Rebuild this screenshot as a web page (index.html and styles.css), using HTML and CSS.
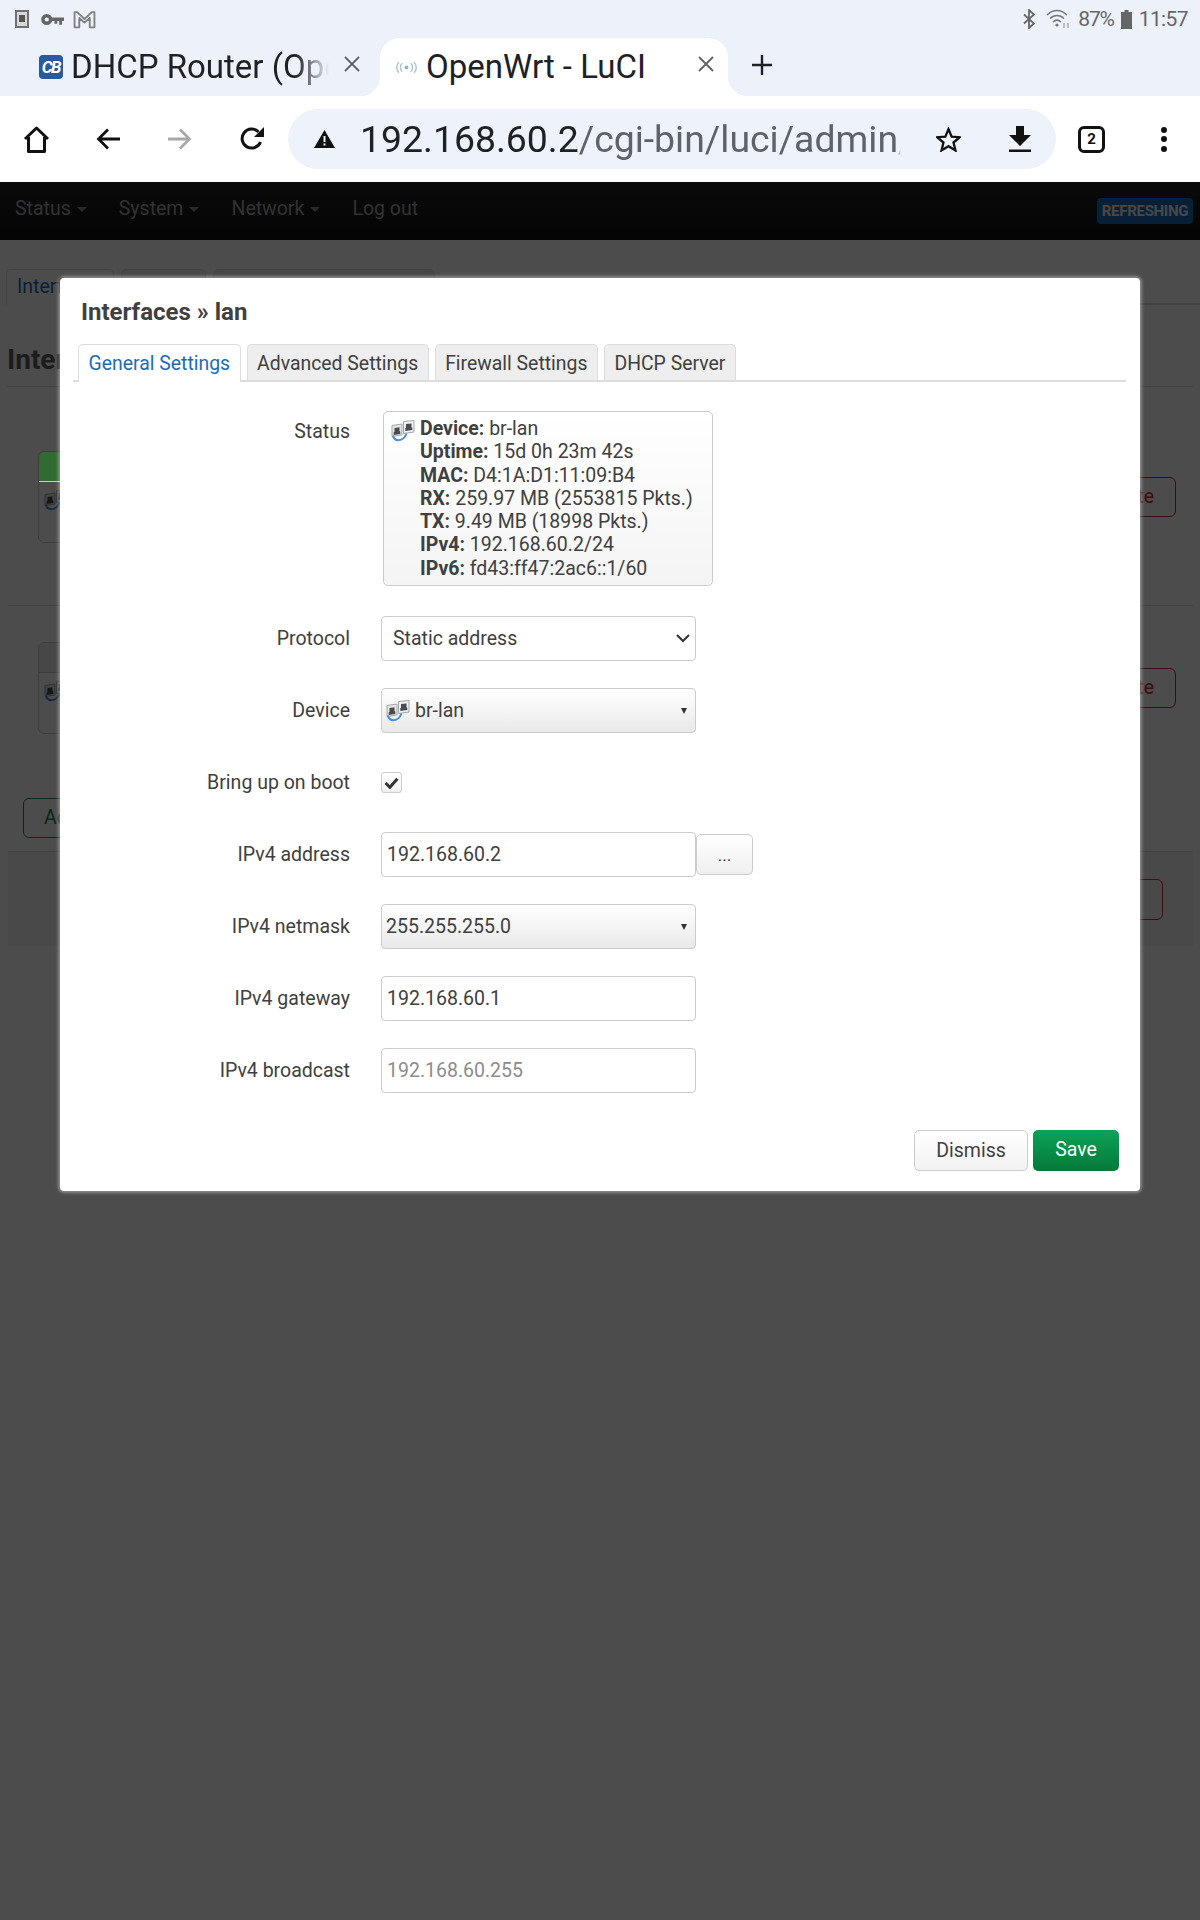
FILE: index.html
```html
<!DOCTYPE html>
<html lang="en">
<head>
    <meta charset="UTF-8">
    <meta name="viewport" content="width=device-width, initial-scale=1.0">
    <title>OpenWrt - LuCI</title>
    <link rel="stylesheet" href="styles.css">
</head>
<body>
    <svg class="defs" width="0" height="0">
        <symbol id="iface" viewBox="0 0 24 22">
            <path d="M1 5.500l10-1.500v11L1 16.500z" fill="#e4e6e8" stroke="#a3a7ab" stroke-width="1"/>
            <path d="M12.500 1.500L23 .5v11.500l-10.500 1.500z" fill="#eef0f2" stroke="#a3a7ab" stroke-width="1"/>
            <path d="M3.500 8l5-.7v3.800l.8.5v2.400l-6.600.9v-2.600l.8-.6z" fill="#4a4d50"/>
            <path d="M15 4l5.500-.6v3.800l.8.5V10l-7 .9V8.300l.7-.6z" fill="#4a4d50"/>
            <path d="M2 15.500c1 6 10 7 13.500-2" fill="none" stroke="#4c8fd4" stroke-width="2"/>
        </symbol>
    </svg>

    <div class="statusbar">
        <div class="status-left">
            <svg class="ic-sim" viewBox="0 0 14 18"><rect x="1" y="1" width="12" height="16" fill="#d8d8d8" stroke="#707070" stroke-width="2"/><rect x="4" y="5" width="6" height="7" fill="#555"/></svg>
            <svg class="ic-key" viewBox="0 0 24 13"><circle cx="6" cy="6.500" r="4" fill="none" stroke="#666" stroke-width="3.600"/><path d="M10 4.500h14v3.500h-2v4h-3V8h-2v3h-3V8h-4z" fill="#666"/></svg>
            <svg class="ic-mail" viewBox="0 0 22 18"><path d="M1.500 16.500V2h2.500l7 6.500L18 2h2.500v14.500h-4.500V7.500L11 12 6 7.500v9z" fill="none" stroke="#808080" stroke-width="1.800" stroke-linejoin="round"/></svg>
        </div>
        <div class="status-right">
            <svg class="ic-bt" viewBox="0 0 12 20"><path d="M1 5.500l10 9-5 4.500V1l5 4.500-10 9" fill="none" stroke="#666" stroke-width="1.800"/></svg>
            <svg class="ic-wifi" viewBox="0 0 25 20"><path d="M1 6c6-6 14-6 20 0M4 9.500c4-4 10-4 14 0M7 13c2.400-2.400 5.600-2.400 8 0" fill="none" stroke="#777" stroke-width="1.500"/><circle cx="11" cy="16" r="1.600" fill="#777"/><path d="M18 14v5M22 19v-5" stroke="#aaa" stroke-width="1.500"/></svg>
            <span class="status-text pct">87%</span>
            <svg class="ic-batt" viewBox="0 0 11 19"><path d="M3.500 0h4v2H11v17H0V2h3.500z" fill="#666"/></svg>
            <span class="status-text">11:57</span>
        </div>
    </div>

    <div class="tabstrip">
        <div class="tab">
            <span class="favicon-cb">CB</span>
            <span class="tab-title fade">DHCP Router (OpenWrt)</span>
            <svg class="tab-close" viewBox="0 0 16 16"><path d="M1 1l14 14M15 1L1 15" stroke="#5f6368" stroke-width="1.800"/></svg>
        </div>
        <div class="tab active">
            <svg class="favicon-wifi" viewBox="0 0 22 13"><circle cx="11" cy="6.500" r="2" fill="#8fb4c4"/><path d="M6.500 2c-2.500 2.500-2.500 6.500 0 9M15.500 2c2.500 2.500 2.500 6.500 0 9M3 1c-3 3-3 8 0 11M19 1c3 3 3 8 0 11" fill="none" stroke="#a9c6d2" stroke-width="1.500"/></svg>
            <span class="tab-title">OpenWrt - LuCI</span>
            <svg class="tab-close" viewBox="0 0 16 16"><path d="M1 1l14 14M15 1L1 15" stroke="#5f6368" stroke-width="1.800"/></svg>
        </div>
        <svg class="tab-new" viewBox="0 0 20 20"><path d="M10 0v20M0 10h20" stroke="#202124" stroke-width="2.400"/></svg>
    </div>

    <div class="toolbar">
        <svg class="tool ic-home" viewBox="0 0 27 27"><path d="M2 13L13.500 2 25 13M5.500 11v14.500h16V11" fill="none" stroke="#111" stroke-width="3" stroke-linejoin="round"/></svg>
        <svg class="tool ic-back" viewBox="0 0 24 22"><path d="M12 1.500L2.500 11l9.500 9.500M3 11h21" fill="none" stroke="#111" stroke-width="2.800"/></svg>
        <svg class="tool ic-forward" viewBox="0 0 24 22"><path d="M12 1.500l9.500 9.500-9.500 9.500M21 11H0" fill="none" stroke="#a8a8a8" stroke-width="2.800"/></svg>
        <svg class="tool ic-reload" viewBox="0 0 24 24"><path d="M20.500 15A9.500 9.500 0 1 1 18.500 5" fill="none" stroke="#111" stroke-width="3"/><path d="M24 0v10H14z" fill="#111"/></svg>
        <div class="omnibox">
            <svg class="ic-warn" viewBox="0 0 21 18"><path d="M10.500 0L21 18H0z" fill="#111"/><path d="M9.500 6h2v6h-2zM9.500 13.500h2v2h-2z" fill="#eef2fa"/></svg>
            <div class="url fade-url"><span class="url-host">192.168.60.2</span>/cgi-bin/luci/admin/network/network</div>
            <svg class="ic-star" viewBox="0 0 24 24"><path d="M12 2l3 7.200 7.800.6-6 5.100 1.900 7.600L12 18.400l-6.700 4.100 1.900-7.600-6-5.100L9 9.200z" fill="none" stroke="#111" stroke-width="2.200"/></svg>
            <svg class="ic-download" viewBox="0 0 22 26"><path d="M7 0h8v9h7L11 20 0 9h7zM0 23.500h22V26H0z" fill="#111"/></svg>
        </div>
        <div class="tabcount">2</div>
        <div class="dots"><i></i><i></i><i></i></div>
    </div>

    <div class="page">
        <div class="navbar">
            <ul class="nav-menu">
                <li class="dropdown">Status</li>
                <li class="dropdown">System</li>
                <li class="dropdown">Network</li>
                <li>Log out</li>
            </ul>
            <span class="badge">REFRESHING</span>
        </div>

        <div class="content">
            <ul class="page-tabs">
                <li class="first">Interfaces</li>
                <li class="second">Global</li>
                <li class="third">Devices</li>
            </ul>
            <h2>Interfaces</h2>
            <div class="iface-row row-lan">
                <div class="iface-box">
                    <div class="iface-head green"></div>
                    <div class="iface-body"><svg class="iface-icon"><use href="#iface"/></svg></div>
                </div>
                <span class="btn-delete">Delete</span>
            </div>
            <div class="iface-row row-wan">
                <div class="iface-box">
                    <div class="iface-head"></div>
                    <div class="iface-body"><svg class="iface-icon"><use href="#iface"/></svg></div>
                </div>
                <span class="btn-delete">Delete</span>
            </div>
            <div class="add-row"><span class="btn-add">Add new interface</span></div>
            <div class="page-actions"><span class="btn-apply"></span></div>
        </div>

        <div class="backdrop"></div>

        <div class="modal">
            <h4>Interfaces » lan</h4>
            <ul class="modal-tabs">
                <li class="selected">General Settings</li>
                <li>Advanced Settings</li>
                <li>Firewall Settings</li>
                <li>DHCP Server</li>
            </ul>

            <div class="form-row status-row">
                <label>Status</label>
                <div class="status-box">
                    <svg class="status-icon"><use href="#iface"/></svg>
                    <div>
                        <div><b>Device:</b> br-lan</div>
                        <div><b>Uptime:</b> 15d 0h 23m 42s</div>
                        <div><b>MAC:</b> D4:1A:D1:11:09:B4</div>
                        <div><b>RX:</b> 259.97 MB (2553815 Pkts.)</div>
                        <div><b>TX:</b> 9.49 MB (18998 Pkts.)</div>
                        <div><b>IPv4:</b> 192.168.60.2/24</div>
                        <div><b>IPv6:</b> fd43:ff47:2ac6::1/60</div>
                    </div>
                </div>
            </div>

            <div class="form-row">
                <label>Protocol</label>
                <div class="field select-native">
                    <span>Static address</span>
                    <svg class="chevron" viewBox="0 0 14 9"><path d="M1 1l6 6 6-6" fill="none" stroke="#333" stroke-width="2"/></svg>
                </div>
            </div>
            <div class="form-row">
                <label>Device</label>
                <div class="field dropdown-field device">
                    <svg class="device-icon"><use href="#iface"/></svg>
                    <span>br-lan</span>
                    <i class="arrow"></i>
                </div>
            </div>
            <div class="form-row">
                <label>Bring up on boot</label>
                <div class="checkbox">
                    <svg viewBox="0 0 14 11"><path d="M1.500 5.500l4 4 7-8" fill="none" stroke="#333" stroke-width="2.800"/></svg>
                </div>
            </div>
            <div class="form-row">
                <label>IPv4 address</label>
                <div class="field text-field">192.168.60.2</div>
                <span class="btn-more">...</span>
            </div>
            <div class="form-row">
                <label>IPv4 netmask</label>
                <div class="field dropdown-field">
                    <span>255.255.255.0</span>
                    <i class="arrow"></i>
                </div>
            </div>
            <div class="form-row">
                <label>IPv4 gateway</label>
                <div class="field text-field">192.168.60.1</div>
            </div>
            <div class="form-row">
                <label>IPv4 broadcast</label>
                <div class="field text-field placeholder">192.168.60.255</div>
            </div>

            <div class="modal-actions">
                <span class="btn btn-dismiss">Dismiss</span>
                <span class="btn btn-save">Save</span>
            </div>
        </div>
    </div>
</body>
</html>
```

FILE: styles.css
```css
* {
    box-sizing: border-box;
}
html, body {
    margin: 0;
    height: 1920px;
    overflow: hidden;
}
body {
    width: 1200px;
    background: #fff;
    color: #404040;
    font-family: Roboto, "Liberation Sans", sans-serif;
    font-size: 19.5px;
}
ul {
    list-style: none;
    margin: 0;
    padding: 0;
}
.defs {
    position: absolute;
}

/* status bar */
.statusbar {
    height: 38px;
    background: #edf2fa;
    display: flex;
    justify-content: space-between;
    align-items: center;
    padding: 0 12px 0 15px;
}
.status-left, .status-right {
    display: flex;
    align-items: center;
}
.ic-sim { width: 14px; height: 18px; margin-right: 12px; }
.ic-key { width: 23px; height: 13px; margin-right: 9px; }
.ic-mail { width: 23px; height: 19px; }
.ic-bt { width: 12px; height: 20px; margin-right: 11px; }
.ic-wifi { width: 25px; height: 20px; margin-right: 7px; }
.ic-batt { width: 11px; height: 19px; margin: 0 7px; }
.status-text {
    font-size: 21px;
    color: #666;
    letter-spacing: -0.6px;
}
.pct {
    letter-spacing: -1.2px;
}

/* tabs */
.tabstrip {
    height: 58px;
    background: #edf2fa;
    display: flex;
    align-items: stretch;
    position: relative;
}
.tab {
    display: flex;
    align-items: center;
    position: relative;
    font-size: 33px;
    color: #202124;
    white-space: nowrap;
}
.tab:first-child {
    width: 380px;
    padding-left: 39px;
}
.tab.active {
    width: 348px;
    background: #fff;
    border-radius: 20px 20px 0 0;
    padding-left: 16px;
}
.tab.active::before, .tab.active::after {
    content: "";
    position: absolute;
    bottom: 0;
    width: 20px;
    height: 20px;
}
.tab.active::before {
    left: -20px;
    background: radial-gradient(circle at 0 0, transparent 20px, #fff 20.5px);
}
.tab.active::after {
    right: -20px;
    background: radial-gradient(circle at 100% 0, transparent 20px, #fff 20.5px);
}
.favicon-cb {
    width: 24px;
    height: 24px;
    flex: none;
    background: #2a5a9e;
    border-radius: 4px;
    color: #fff;
    font-size: 17px;
    font-weight: bold;
    font-style: italic;
    line-height: 24px;
    text-align: center;
    letter-spacing: -1.500px;
    margin-right: 8px;
}
.favicon-wifi {
    width: 21px;
    height: 13px;
    flex: none;
    margin-right: 9px;
}
.tab-title {
    overflow: hidden;
    display: block;
    width: 240px;
    line-height: 44px;
}
.tab-title.fade {
    width: 260px;
    -webkit-mask-image: linear-gradient(to right, #000 225px, transparent 258px);
    mask-image: linear-gradient(to right, #000 225px, transparent 258px);
}
.tab-close {
    width: 16px;
    height: 16px;
    position: absolute;
    top: 18px;
    right: 14px;
}
.tab:first-child .tab-close {
    right: 20px;
}
.tab-new {
    width: 20px;
    height: 20px;
    margin: 17px 0 0 24px;
}

/* toolbar */
.toolbar {
    height: 86px;
    display: flex;
    align-items: center;
    background: #fff;
}
.tool {
    flex: none;
}
.ic-home { width: 27px; height: 27px; margin-left: 23px; }
.ic-back { width: 24px; height: 22px; margin-left: 46px; }
.ic-forward { width: 24px; height: 22px; margin-left: 48px; }
.ic-reload { width: 24px; height: 24px; margin-left: 48px; }
.omnibox {
    width: 768px;
    height: 60px;
    margin-left: 24px;
    background: #eef2fa;
    border-radius: 30px;
    display: flex;
    align-items: center;
    padding-left: 26px;
    position: relative;
}
.ic-warn {
    width: 21px;
    height: 18px;
    flex: none;
}
.url {
    width: 541px;
    margin-left: 25px;
    font-size: 37.400px;
    color: #5f6368;
    white-space: nowrap;
    overflow: hidden;
    line-height: 50px;
}
.url-host {
    color: #202124;
}
.fade-url {
    -webkit-mask-image: linear-gradient(to right, #000 536px, transparent 541px);
    mask-image: linear-gradient(to right, #000 536px, transparent 541px);
}
.ic-star { width: 25px; height: 25px; margin-left: 35px; flex: none; }
.ic-download { width: 22px; height: 26px; margin-left: 48px; flex: none; }
.tabcount {
    width: 27px;
    height: 27px;
    margin-left: 22px;
    border: 3px solid #111;
    border-radius: 6px;
    font-size: 15px;
    font-weight: bold;
    line-height: 21px;
    text-align: center;
    color: #111;
}
.dots {
    margin-left: 56px;
    display: flex;
    flex-direction: column;
    gap: 3.500px;
}
.dots i {
    display: block;
    width: 6px;
    height: 6px;
    border-radius: 50%;
    background: #111;
}

/* page under the dialog */
.page {
    position: relative;
    height: 1738px;
    background: #fff;
    overflow: hidden;
}
.navbar {
    height: 58px;
    background: linear-gradient(#222, #111);
    display: flex;
    justify-content: space-between;
    align-items: center;
    padding: 0 7px 0 15px;
}
.nav-menu {
    display: flex;
    color: #a6a6a6;
    font-size: 19.500px;
    padding-bottom: 5px;
}
.nav-menu li {
    margin-right: 32px;
}
.dropdown::after {
    content: "";
    display: inline-block;
    margin-left: 6px;
    vertical-align: middle;
    border-top: 5px solid #8a8a8a;
    border-left: 5px solid transparent;
    border-right: 5px solid transparent;
}
.badge {
    width: 96px;
    height: 26px;
    background: #1a6ab8;
    border-radius: 4px;
    color: #eee;
    font-size: 15px;
    font-weight: bold;
    line-height: 26px;
    text-align: center;
    letter-spacing: -0.3px;
}
.content {
    padding: 29px 7px 0 8px;
}
.page-tabs {
    display: flex;
    height: 36px;
    border-bottom: 2px solid #ddd;
    margin-right: -7px;
}
.page-tabs li {
    height: 36px;
    border: 1px solid #ddd;
    border-radius: 5px 5px 0 0;
    background: #eee;
    padding: 5px 10px;
    overflow: hidden;
    margin-right: 7px;
}
.page-tabs .first {
    width: 108px;
    margin-left: -2px;
    background: #fff;
    color: #1c6cb5;
    border-bottom-color: #fff;
}
.page-tabs .second { width: 85px; }
.page-tabs .third { width: 222px; }
.content h2 {
    margin: 0;
    height: 82px;
    padding-top: 35px;
    margin-left: -1px;
    font-size: 28px;
    line-height: 40px;
    color: #606060;
    border-bottom: 1px solid #ddd;
}
.iface-row {
    display: flex;
    justify-content: space-between;
    align-items: center;
    padding: 0 17px 0 30px;
    border-bottom: 1px solid #ddd;
}
.row-lan {
    height: 219px;
    padding-top: 0;
    align-items: flex-start;
}
.row-lan .iface-box { margin-top: 64px; }
.row-lan .btn-delete { margin-top: 90px; }
.row-wan {
    height: 150px;
    align-items: flex-start;
    border-bottom: 0;
}
.row-wan .iface-box { margin-top: 36px; }
.row-wan .btn-delete { margin-top: 62px; }
.iface-box {
    width: 220px;
    height: 92px;
    border: 1px solid #ccc;
    border-radius: 6px;
    overflow: hidden;
}
.iface-head {
    height: 30px;
    background: #eee;
    border-bottom: 1px solid #ccc;
}
/* the status colour stays bright through the backdrop */
.iface-head.green {
    background: #316b32;
    position: relative;
    z-index: 2;
}
.iface-icon {
    width: 24px;
    height: 22px;
    margin: 7px 0 0 5px;
    display: block;
}
.btn-delete {
    width: 130px;
    height: 40px;
    border: 1px solid #c9302c;
    border-radius: 6px;
    color: #c9302c;
    line-height: 38px;
    text-align: right;
    padding-right: 21px;
}
.add-row {
    height: 96px;
    padding: 42px 0 0 15px;
    border-bottom: 1px solid #ddd;
}
.btn-add {
    display: block;
    width: 200px;
    height: 40px;
    border: 1px solid #1d8a4d;
    border-radius: 6px;
    color: #1d8a4d;
    line-height: 38px;
    padding-left: 20px;
}
.page-actions {
    height: 94px;
    background: #f6f6f6;
    padding: 27px 30px 0 0;
    display: flex;
    justify-content: flex-end;
}
.btn-apply {
    width: 130px;
    height: 41px;
    border: 1px solid #c9302c;
    border-radius: 6px;
}
.backdrop {
    position: absolute;
    top: 0;
    left: 0;
    right: 0;
    bottom: 0;
    z-index: 1;
    background: rgba(0, 0, 0, 0.7);
}

/* dialog */
.modal {
    position: absolute;
    z-index: 3;
    top: 96px;
    left: 60px;
    width: 1080px;
    height: 913px;
    background: #fff;
    border-radius: 4px;
    box-shadow: 0 0 3px 2px rgba(255, 255, 255, 0.35);
    padding: 0 21px;
}
.modal h4 {
    margin: 0;
    padding-top: 19px;
    height: 66px;
    font-size: 24px;
    line-height: 30px;
    font-weight: bold;
    color: #404040;
}
.modal-tabs {
    display: flex;
    height: 38px;
    margin: 0 -7px 0 -8px;
    padding-left: 5px;
    border-bottom: 2px solid #ddd;
    font-size: 19.400px;
}
.modal-tabs li {
    height: 36px;
    margin-right: 6px;
    padding: 0 9.500px;
    background: #eee;
    border: 1px solid #ddd;
    border-bottom: 0;
    border-radius: 5px 5px 0 0;
    line-height: 37px;
    white-space: nowrap;
}
.modal-tabs .selected {
    height: 38px;
    background: #fff;
    color: #1c6cb5;
}
.form-row {
    display: flex;
    align-items: center;
    height: 45px;
    margin-bottom: 27px;
}
.form-row label {
    width: 269px;
    text-align: right;
    margin-right: 31px;
    flex: none;
}
.status-row {
    height: 175px;
    margin: 29px 0 30px;
    align-items: flex-start;
}
.status-row label {
    margin-right: 33px;
    padding-top: 9px;
}
.status-box {
    width: 330px;
    height: 175px;
    display: flex;
    padding: 5px 6px;
    border: 1px solid #ccc;
    border-radius: 5px;
    background: linear-gradient(#fff, #f4f4f4);
    line-height: 23.300px;
    white-space: nowrap;
}
.status-icon {
    width: 24px;
    height: 22px;
    margin: 3px 5px 0 1px;
    flex: none;
}
.status-box b {
    font-weight: bold;
}
.field {
    width: 315px;
    height: 45px;
    border: 1px solid #ccc;
    border-radius: 4px;
    display: flex;
    align-items: center;
    flex: none;
}
.select-native {
    padding: 0 5px 0 11px;
    justify-content: space-between;
}
.chevron {
    width: 14px;
    height: 9px;
}
.dropdown-field {
    background: linear-gradient(#fff, #e9e9e9);
    padding: 0 4px;
    position: relative;
}
.arrow {
    position: absolute;
    right: 8px;
    top: 19px;
    border-top: 6px solid #333;
    border-left: 3px solid transparent;
    border-right: 3px solid transparent;
}
.device-icon {
    width: 24px;
    height: 22px;
    margin-right: 5px;
    flex: none;
}
.text-field {
    padding: 0 5px;
}
.placeholder {
    color: #8c8c8c;
}
.checkbox {
    width: 21px;
    height: 21px;
    border: 1px solid #ccc;
    border-radius: 3px;
    display: flex;
    align-items: center;
    justify-content: center;
    background: linear-gradient(#fff, #f0f0f0);
}
.checkbox svg {
    width: 15px;
    height: 12px;
}
.btn-more {
    width: 57px;
    height: 41px;
    border: 1px solid #ccc;
    border-radius: 5px;
    background: linear-gradient(#fff, #efefef);
    text-align: center;
    line-height: 40px;
    font-size: 17px;
}
.modal-actions {
    display: flex;
    justify-content: flex-end;
    gap: 5px;
    margin: 37px 0 0 0;
}
.btn {
    height: 41px;
    border-radius: 5px;
    line-height: 39px;
    text-align: center;
}
.btn-dismiss {
    width: 114px;
    border: 1px solid #ccc;
    background: linear-gradient(#fff, #f2f2f2);
}
.btn-save {
    width: 86px;
    color: #fff;
    background: linear-gradient(#0ca357, #05793a);
}
```
